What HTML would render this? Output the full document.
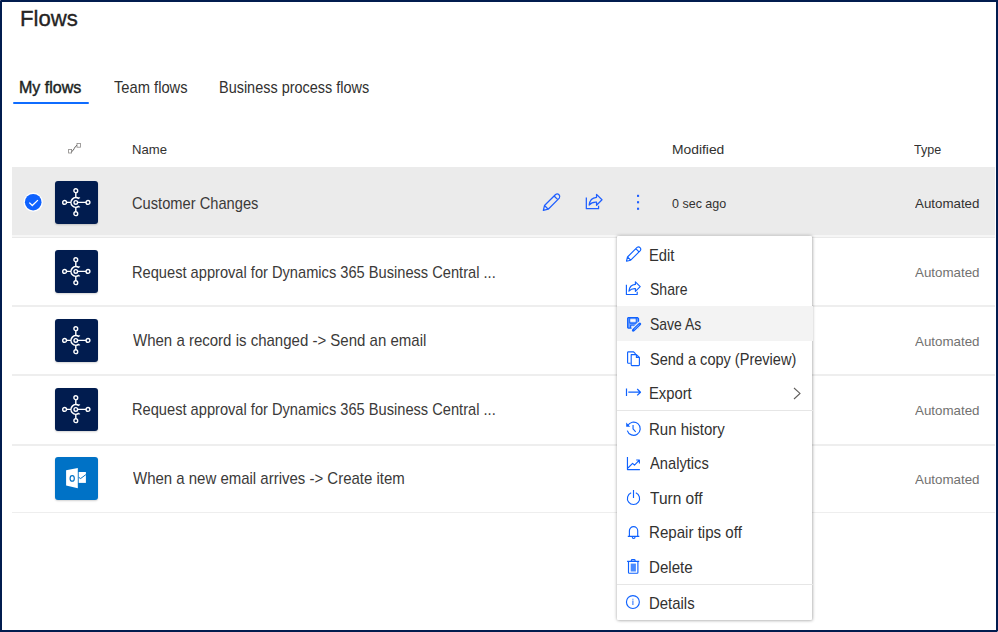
<!DOCTYPE html>
<html>
<head>
<meta charset="utf-8">
<title>Flows</title>
<style>
*{box-sizing:border-box;margin:0;padding:0}
html,body{width:998px;height:632px;overflow:hidden;background:#fff}
body{font-family:"Liberation Sans",sans-serif;color:#323130;position:relative}
.frame{position:absolute;left:0;top:0;width:998px;height:632px;border:2px solid #011c4f;pointer-events:none;z-index:50}
.abs{position:absolute;white-space:nowrap;transform-origin:0 50%}
.title{left:20px;top:5.6px;font-size:22px;line-height:26px;color:#252423;font-weight:400;-webkit-text-stroke:.35px #252423}
.tab{top:78.5px;font-size:14.6px;line-height:18px;color:#323130}
.tab.sel{font-weight:400;color:#201f1e;-webkit-text-stroke:.42px #201f1e}
.tabline{position:absolute;left:12.5px;top:102px;width:76px;height:2px;background:#0f6cff;border-radius:1px}
.hdr{top:142px;font-size:12.8px;line-height:14px;color:#323130}
.row{position:absolute;left:12px;width:982.6px;height:68.3px}
.row.sel{background:#ebebeb}
.sep{position:absolute;left:12px;width:982.6px;height:2.2px;background:#eeeeee}
.tile{position:absolute;left:55px;width:43px;height:43px;border-radius:3px;background:#011c4f;box-shadow:0 1px 2px rgba(0,0,0,.18)}
.tile.ol{background:#0072c6}
.name{left:133px;font-size:15.4px;line-height:18px;color:#3b3a39;transform-origin:0 50%}
.mod{left:673px;font-size:12.4px;line-height:14px;color:#323130}
.typ{left:914.6px;font-size:13px;line-height:14px;color:#323130}
.typ.dim{color:#727170}
.menu{position:absolute;left:616.5px;top:236px;width:195.8px;height:383.6px;background:#fff;border-radius:1px;box-shadow:0 0 3.5px rgba(0,0,0,.35),1px 1px 3px rgba(0,0,0,.1);z-index:10}
.hovbg{position:absolute;left:0;top:70px;width:196px;height:35px;background:#f3f3f3}
.ml{font-size:15.7px;line-height:18px;color:#323130;z-index:15;transform-origin:0 50%}
.msep{position:absolute;left:0;width:196px;height:1px;background:#e6e6e6}
svg{display:block;overflow:visible}
</style>
</head>
<body>
<div class="abs title" id="t_title" style="left:19.60px;top:5.90px;font-size:22.5px;line-height:26px;transform:scaleX(0.9850)">Flows</div>

<div class="abs tab sel" id="t_tab1" style="left:18.50px;top:78.80px;font-size:15.7px;line-height:18px;transform:scaleX(1.0227)">My flows</div>
<div class="abs tab" id="t_tab2" style="left:113.71px;top:79.40px;font-size:15.7px;line-height:18px;transform:scaleX(0.9382)">Team flows</div>
<div class="abs tab" id="t_tab3" style="left:219.23px;top:79.40px;font-size:15.7px;line-height:18px;transform:scaleX(0.9211)">Business process flows</div>
<div class="tabline"></div>

<div class="abs hdr" id="t_hname" style="left:131.65px;top:142.78px;font-size:13.4px;line-height:14px;transform:scaleX(0.9798)">Name</div>
<div class="abs hdr" id="t_hmod" style="left:671.72px;top:142.69px;font-size:13.4px;line-height:14px;transform:scaleX(1.0328)">Modified</div>
<div class="abs hdr" id="t_htype" style="left:913.56px;top:142.70px;font-size:13.4px;line-height:14px;transform:scaleX(0.9347)">Type</div>

<div class="row sel" style="top:166.7px"></div>
<div class="sep" style="top:235px;height:2px;background:#f6f6f6"></div>
<div class="sep" style="top:237px;height:.9px;background:#e9e9e9"></div>
<div class="sep" style="top:304.7px"></div>
<div class="sep" style="top:373.9px"></div>
<div class="sep" style="top:443.6px"></div>
<div class="sep" style="top:512px;height:1.2px"></div>

<div class="tile" style="top:181px"></div>
<div class="tile" style="top:250px"></div>
<div class="tile" style="top:319px"></div>
<div class="tile" style="top:388px"></div>
<div class="tile ol" style="top:457px"></div>

<div class="abs name" id="t_n1" style="left:132.20px;top:195.19px;font-size:15.7px;line-height:18px;transform:scaleX(0.9351)">Customer Changes</div>
<div class="abs name" id="t_n2" style="left:132.35px;top:263.79px;font-size:15.7px;line-height:18px;transform:scaleX(0.9332)">Request approval for Dynamics 365 Business Central ...</div>
<div class="abs name" id="t_n3" style="left:132.72px;top:332.19px;font-size:15.7px;line-height:18px;transform:scaleX(0.9570)">When a record is changed -&gt; Send an email</div>
<div class="abs name" id="t_n4" style="left:132.35px;top:400.59px;font-size:15.7px;line-height:18px;transform:scaleX(0.9332)">Request approval for Dynamics 365 Business Central ...</div>
<div class="abs name" id="t_n5" style="left:132.72px;top:469.59px;font-size:15.7px;line-height:18px;transform:scaleX(0.9547)">When a new email arrives -&gt; Create item</div>

<div class="abs mod" id="t_mod" style="left:672.15px;top:197.20px;font-size:13.4px;line-height:14px;transform:scaleX(0.9335)">0 sec ago</div>

<div class="abs typ" id="t_ty1" style="left:914.56px;top:197.39px;font-size:13.4px;line-height:14px;transform:scaleX(0.9947)">Automated</div>
<div class="abs typ dim" id="t_ty2" style="left:914.56px;top:266.39px;font-size:13.4px;line-height:14px;transform:scaleX(0.9965)">Automated</div>
<div class="abs typ dim" id="t_ty3" style="left:914.56px;top:335.39px;font-size:13.4px;line-height:14px;transform:scaleX(0.9965)">Automated</div>
<div class="abs typ dim" id="t_ty4" style="left:914.56px;top:403.59px;font-size:13.4px;line-height:14px;transform:scaleX(0.9965)">Automated</div>
<div class="abs typ dim" id="t_ty5" style="left:914.56px;top:472.50px;font-size:13.4px;line-height:14px;transform:scaleX(0.9965)">Automated</div>

<div class="menu">
  <div class="hovbg"></div>
  <div class="msep" style="top:173.8px"></div>
  <div class="msep" style="top:348.0px"></div>
</div>

<div class="abs ml" id="t_m1" style="left:649.11px;top:247.40px;font-size:15.7px;line-height:18px;transform:scaleX(0.9393)">Edit</div>
<div class="abs ml" id="t_m2" style="left:650.12px;top:280.70px;font-size:15.7px;line-height:18px;transform:scaleX(0.8959)">Share</div>
<div class="abs ml" id="t_m3" style="left:649.52px;top:316.40px;font-size:15.7px;line-height:18px;transform:scaleX(0.8897)">Save As</div>
<div class="abs ml" id="t_m4" style="left:650.10px;top:350.70px;font-size:15.7px;line-height:18px;transform:scaleX(0.9266)">Send a copy (Preview)</div>
<div class="abs ml" id="t_m5" style="left:649.38px;top:385.40px;font-size:15.7px;line-height:18px;transform:scaleX(0.9423)">Export</div>
<div class="abs ml" id="t_m6" style="left:649.37px;top:420.59px;font-size:15.7px;line-height:18px;transform:scaleX(0.9558)">Run history</div>
<div class="abs ml" id="t_m7" style="left:650.31px;top:454.79px;font-size:15.7px;line-height:18px;transform:scaleX(0.9365)">Analytics</div>
<div class="abs ml" id="t_m8" style="left:649.53px;top:489.55px;font-size:15.7px;line-height:18px;transform:scaleX(0.9863)">Turn off</div>
<div class="abs ml" id="t_m9" style="left:649.23px;top:524.40px;font-size:15.7px;line-height:18px;transform:scaleX(0.9622)">Repair tips off</div>
<div class="abs ml" id="t_m10" style="left:649.28px;top:559.40px;font-size:15.7px;line-height:18px;transform:scaleX(0.9615)">Delete</div>
<div class="abs ml" id="t_m11" style="left:649.38px;top:595.40px;font-size:15.7px;line-height:18px;transform:scaleX(0.9513)">Details</div>
<svg class="ov" width="998" height="632" viewBox="0 0 998 632" style="position:absolute;left:0;top:0;z-index:20">
<defs>
<g id="bc" fill="none" stroke="#fff" stroke-width="1.4">
  <circle cx="0" cy="0" r="1.8"/>
  <path d="M3.1 -3.7 A4.8 4.8 0 1 0 3.1 3.7" stroke-width="1.5"/>
  <path d="M2.4 -4.4L4.3 -4.6M2.4 4.4L4.3 4.6" stroke-width="1"/>
  <circle cx="0" cy="-11.7" r="1.9"/><circle cx="0" cy="11.3" r="1.9"/>
  <circle cx="-11.2" cy="0" r="1.9"/><circle cx="12.2" cy="0" r="1.9"/>
  <path d="M0 -9.8V-4.8M0 9.4V4.8M-9.3 0H-4.8M1.8 0H10.3"/>
</g>
</defs>
<!-- header flow icon -->
<g fill="none" stroke="#8a8886" stroke-width="0.8">
  <rect x="68.6" y="149.4" width="3" height="3.6"/>
  <rect x="77" y="143.4" width="3.4" height="3.8"/>
  <path d="M71.6 151.6C74 151 74.5 146 77 145.3" stroke="#605e5c" stroke-width="1"/>
</g>
<!-- check circle -->
<circle cx="33.2" cy="202.2" r="9.6" fill="#fff"/>
<circle cx="33.2" cy="202.2" r="8.3" fill="#0f62fe"/>
<path d="M29.3 202.6L32.3 205.5L37.9 200.1" fill="none" stroke="#fff" stroke-width="1.3"/>
<!-- tiles icons -->
<use href="#bc" x="75.8" y="202.4"/>
<use href="#bc" x="75.8" y="271.4"/>
<use href="#bc" x="75.8" y="340.4"/>
<use href="#bc" x="75.8" y="409.4"/>
<!-- outlook -->
<g transform="translate(55,457)">
  <path d="M11.1 13.2L22.8 11.1V31.2L11.1 28.6Z" fill="#fff"/>
  <ellipse cx="17.2" cy="21.4" rx="2.1" ry="2.8" fill="none" stroke="#0072c6" stroke-width="1.2"/>
  <rect x="23.7" y="15" width="7.2" height="10.9" fill="#fff"/>
  <path d="M23.7 20.4L25.7 21.5L30.9 17.6" fill="none" stroke="#0072c6" stroke-width="1"/>
</g>
<!-- row action icons -->
<g fill="none" stroke="#1f5fff" stroke-width="1.25" stroke-linejoin="round">
  <g transform="translate(543,193.3) scale(1.155)">
    <path d="M0.3 14.8L1.3 10.6L10.9 1A2.3 2.3 0 0 1 14.1 4.2L4.5 13.8Z M1.3 10.6L4.5 13.8 M9.6 2.3L12.8 5.5" stroke-width="1.1"/>
  </g>
  <g transform="translate(586.1,194.1) scale(1.135) translate(-626.2,-281.6)">
    <path d="M626.4 284.7V294.5H637.2V291.8" stroke-width="1.1"/>
    <path d="M635.4 281.8L640.2 286.6L635.4 291.4V288.6C632.5 288.4 630.5 289.3 628.9 291.2C629.3 287.3 631.8 284.7 635.4 284.4Z" stroke-width="1.1"/>
  </g>
</g>
<g fill="#1f5fff"><rect x="637" y="194.8" width="2.1" height="2.1"/><rect x="637" y="201.2" width="2.1" height="2.1"/><rect x="637" y="207.7" width="2.1" height="2.1"/></g>
<!-- menu icons -->
<g fill="none" stroke="#0f62fe" stroke-width="1.15" stroke-linejoin="round">
  <g transform="translate(626.2,246.4)"><path d="M0.3 14.8L1.3 10.6L10.9 1A2.3 2.3 0 0 1 14.1 4.2L4.5 13.8Z M1.3 10.6L4.5 13.8 M9.6 2.3L12.8 5.5"/></g>
  <path d="M626.4 284.7V294.5H637.2V291.8"/>
  <path d="M635.4 281.8L640.2 286.6L635.4 291.4V288.6C632.5 288.4 630.5 289.3 628.9 291.2C629.3 287.3 631.8 284.7 635.4 284.4Z"/>
  <!-- save as -->
  <path d="M628.2 317.7H637.6L638.5 318.6V327.6L638 328.1H628.2L627.7 327.6V318.2Z" fill="#4d8bff" fill-opacity=".75" stroke-width="1.3"/>
  <path d="M629.8 318V323.2H636.2V318 M630.6 328V325.2H634.6" stroke-width="1"/>
  <rect x="630.3" y="319.2" width="5.3" height="2.6" fill="#fbfbfb" stroke="none"/>
  <rect x="631.4" y="325.8" width="2.4" height="2.2" fill="#dfe8fb" stroke="none"/>
  <path d="M633.3 330.3L639.8 324" stroke="#f3f3f3" stroke-width="5" stroke-linecap="round"/>
  <path d="M633.3 330.3L639.8 324" stroke-width="2.8" stroke-linecap="round"/>
  <path d="M634.2 329.4L639.3 324.5" stroke="#9cc0ff" stroke-width="0.8"/>
  <!-- copy -->
  <path d="M630.6 363.2H628.4A0.8 0.8 0 0 1 627.6 362.4V352.6A0.8 0.8 0 0 1 628.4 351.8H633.6L635.6 353.8"/>
  <path d="M631.2 354.6H636.4L639.4 357.4V364.8A0.8 0.8 0 0 1 638.6 365.6H632A0.8 0.8 0 0 1 631.2 364.8Z M636.4 354.6V357.4H639.4"/>
  <!-- export -->
  <path d="M626.5 388.5V396 M628.3 392.2H640.4 M637.2 389L640.5 392.2L637.2 395.4" stroke-width="1.2"/>
  <!-- run history -->
  <path d="M627.6 426A6.6 6.6 0 1 1 627.3 430.6"/>
  <path d="M626.2 422.6V426.8H630.2Z" fill="#0f62fe" stroke="none"/>
  <path d="M633.05 424.9V428.9L635.7 431.8"/>
  <!-- analytics -->
  <path d="M627.45 457V469.6H639.9"/>
  <path d="M627.9 468L632.6 463.3L634.5 465.2L639.1 460.4 M636.2 460H639.4V463.6"/>
  <!-- power -->
  <path d="M631.2 492.8A6.1 6.1 0 1 0 635.8 492.8 M633.5 490.1V498"/>
  <!-- bell -->
  <path d="M627.8 536.4H639.3 M629.4 536.4V530.8A4.15 4.15 0 0 1 637.7 530.8V536.4 M632.2 536.8A1.45 1.7 0 0 0 635.1 536.8"/>
  <!-- trash -->
  <path d="M627.1 561.3H639.2 M631.3 561.2V560.4A0.9 0.9 0 0 1 632.2 559.6H634.2A0.9 0.9 0 0 1 635.1 560.4V561.2 M628.5 561.3V572.4A0.8 0.8 0 0 0 629.3 573.2H637.1A0.8 0.8 0 0 0 637.9 572.4V561.3"/>
  <rect x="630.7" y="563.6" width="5.2" height="7.9" fill="#4a8bff" stroke="none"/>
  <!-- info -->
  <circle cx="632.9" cy="602" r="6.45"/>
  <path d="M632.9 600.6V605.1 M632.9 598.7V599.7" stroke-width="1.1" stroke-opacity=".85"/>
</g>
<!-- chevron -->
<path d="M794 388L800 393.4L794 399" fill="none" stroke="#605e5c" stroke-width="1.1"/>
</svg>
<div class="frame"></div>
<div style="position:absolute;left:0;top:0;width:1px;height:1px;background:#4d5c85;z-index:60"></div>
<div style="position:absolute;left:997px;top:631px;width:1px;height:1px;background:#8792ae;z-index:60"></div>
</body>
</html>
